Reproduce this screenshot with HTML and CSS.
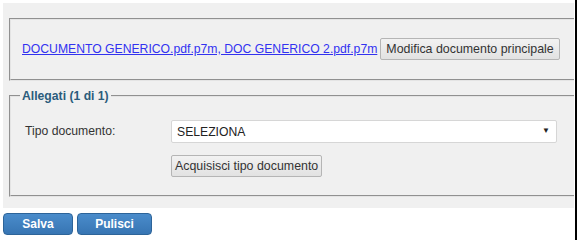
FILE: index.html
```html
<!DOCTYPE html>
<html lang="it">
  <head>
    <meta charset="UTF-8" />
    <meta name="viewport" content="width=device-width, initial-scale=1.0" />
    <title>Documenti</title>
    <link rel="stylesheet" href="styles.css">
  </head>

  <body>
    <div class="page">
      <div class="panel">
        <fieldset class="box box-main">
          <a href="#" class="doc-link">DOCUMENTO GENERICO.pdf.p7m, DOC GENERICO 2.pdf.p7m</a>
          <button class="btn-grey" type="button">Modifica documento principale</button>
        </fieldset>

        <fieldset class="box box-attach">
          <legend>Allegati (1 di 1)</legend>
          <div class="form-grid">
            <label for="tipo">Tipo documento:</label>
            <div class="select-wrap">
              <select id="tipo">
                <option>SELEZIONA</option>
              </select>
              <span class="arrow">&#9660;</span>
            </div>
            <div></div>
            <div>
              <button class="btn-grey btn-narrow" type="button">Acquisisci tipo documento</button>
            </div>
          </div>
        </fieldset>
      </div>

      <div class="actions">
        <button class="btn-blue btn-save" type="button">Salva</button>
        <button class="btn-blue btn-clear" type="button">Pulisci</button>
      </div>
    </div>
  </body>
</html>
```

FILE: styles.css
```css
html,
body {
  margin: 0;
  padding: 0;
  background: #fff;
}

body {
  font-family: "Liberation Sans", Arial, sans-serif;
  font-size: 12.2px;
  color: #333;
}

.page {
  width: 577px;
  height: 240px;
  border-right: 2px solid #000;
  box-sizing: border-box;
  padding: 3px 0 0 3px;
}

.panel {
  width: 571px;
  height: 205px;
  box-sizing: border-box;
  background: #f0f0f0;
  padding: 15px 0 0 6px;
  overflow: hidden;
}

.box {
  margin: 0 -30px 0 0;
  border: 2px groove #e4e4e4;
  min-width: 0;
}

.box-main {
  padding: 18px 0 19px 11px;
  display: flex;
  align-items: center;
  gap: 3px;
  height: 22px;
}

.doc-link {
  color: #3232f0;
  text-decoration: underline;
  white-space: nowrap;
}

.btn-grey {
  font-family: "Liberation Sans", Arial, sans-serif;
  font-size: 12.4px;
  color: #333;
  background: linear-gradient(#f2f2f2, #e2e2e2);
  border: 1px solid #b5b5b5;
  border-radius: 2px;
  height: 22px;
  padding: 0 5px;
  white-space: nowrap;
}

.btn-narrow {
  padding: 0 3px;
}

.box-attach {
  margin-top: 8px;
  padding: 17px 0 18px 9px;
}

.box-attach legend {
  font-weight: bold;
  color: #2b5c7c;
  padding: 0 2px;
}

.form-grid {
  display: grid;
  grid-template-columns: 146px 386px;
  row-gap: 12px;
  padding-left: 5px;
}

.form-grid label {
  padding-top: 4px;
}

.select-wrap {
  position: relative;
}

.select-wrap select {
  width: 100%;
  height: 23px;
  appearance: none;
  -webkit-appearance: none;
  background: #fff;
  border: 1px solid #d6d6d6;
  border-radius: 2px;
  font-family: "Liberation Sans", Arial, sans-serif;
  font-size: 12.2px;
  color: #222;
  padding: 0 5px;
}

.arrow {
  position: absolute;
  right: 7px;
  top: 6px;
  font-size: 8px;
  color: #222;
  pointer-events: none;
}

.actions {
  display: flex;
  gap: 4px;
  margin-top: 5px;
}

.btn-blue {
  height: 22px;
  border: 1px solid #2d6499;
  border-radius: 4px;
  background: linear-gradient(#4a8ccb, #3775b3);
  color: #fff;
  font-family: "Liberation Sans", Arial, sans-serif;
  font-size: 12px;
  font-weight: bold;
  padding: 0;
}

.btn-save {
  width: 70px;
}

.btn-clear {
  width: 75px;
}
```
